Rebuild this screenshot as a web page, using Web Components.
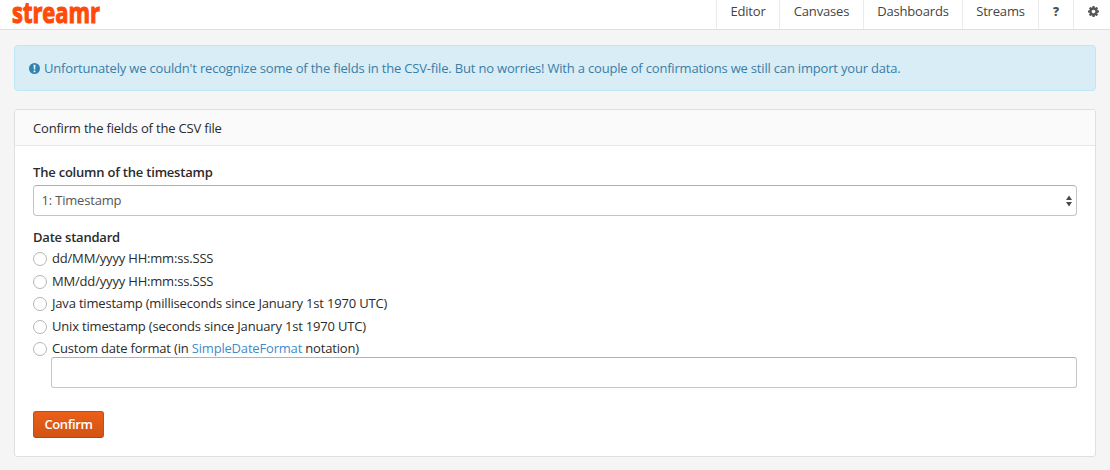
<!DOCTYPE html>
<html lang="en">
<head>
<meta charset="utf-8">
<title>streamr</title>
<style>
html,body{margin:0;height:100%;background:#f5f5f5;overflow:hidden}
body{font:13px/18px "Open Sans","Noto Sans",sans-serif;letter-spacing:-.184px;color:#2b2b2b}
</style>
</head>
<body>
<csv-import-page></csv-import-page>
<script>
const define = (name, html) => {
  const template = document.createElement('template');
  template.innerHTML = '<style>*{box-sizing:border-box}</style>' + html;
  customElements.define(name, class extends HTMLElement {
    constructor() {
      super();
      this.attachShadow({mode: 'open'}).append(template.content.cloneNode(true));
    }
  });
};

define('brand-logo', `<style>:host{display:block;width:104px;height:29px}svg{display:block;overflow:visible}
text{font:700 28px "Open Sans",sans-serif;letter-spacing:0;fill:#ff4a0a;stroke:#ff4a0a;stroke-width:1.1px}</style>
<svg width="104" height="29"><text x="12" y="22.800" textLength="88" lengthAdjust="spacingAndGlyphs">streamr</text></svg>`);

define('nav-item', `<style>:host{box-sizing:border-box;display:flex;justify-content:center;height:29px;padding-top:2px;border-left:1px solid #ebebeb;color:#444;line-height:19px}
svg{display:block}</style><slot></slot>`);

define('gear-icon', `<style>:host{display:block;padding:4px 0 0 2px}svg{display:block}</style>
<svg width="11" height="11" viewBox="0 0 1536 1536"><path fill="#555" d="M1024 768q0-106-75-181t-181-75-181 75-75 181 75 181 181 75 181-75 75-181zm512-109v222q0 12-8 23t-20 13l-185 28q-19 54-39 91 35 50 107 138 10 12 10 25t-9 23q-27 37-99 108t-94 71q-12 0-26-9l-138-108q-44 23-91 38-16 136-29 186-7 28-36 28H657q-14 0-24.500-8.500T621 1506l-28-184q-49-16-90-37l-141 107q-10 9-25 9-14 0-25-11-126-114-165-168-7-10-7-23 0-12 8-23 15-21 51-66.500t54-70.500q-27-50-41-99L29 913q-13-2-21-12.500T0 877V655q0-12 8-23t19-13l186-28q14-46 39-92-40-57-107-138-10-12-10-24 0-10 9-23 26-36 98.500-107.500T337 135q13 0 26 10l138 107q44-23 91-38 16-136 29-186 7-28 36-28h222q14 0 24.500 8.500T915 30l28 184q49 16 90 37l142-107q9-9 24-9 13 0 25 10 129 119 165 170 7 8 7 22 0 12-8 23-15 21-51 66.500t-54 70.500q26 50 41 98l183 28q13 2 21 12.500t8 23.500z"/></svg>`);

define('top-bar', `<style>:host{box-sizing:border-box;display:flex;justify-content:space-between;height:30px;background:#fff;border-bottom:1px solid #dfdfdf}
nav{display:grid;grid-template-columns:63px 84px 99px 76px 35px 37px}
.help{font-weight:800;font-size:12px;color:#505050}</style>
<brand-logo></brand-logo><nav><nav-item>Editor</nav-item><nav-item>Canvases</nav-item><nav-item>Dashboards</nav-item><nav-item>Streams</nav-item><nav-item class="help">?</nav-item><nav-item><gear-icon></gear-icon></nav-item></nav>`);

define('info-alert', `<style>:host{box-sizing:border-box;display:flex;align-items:center;gap:4px;height:46px;margin:15px 14px 0;padding:0 14px;border:1px solid #bce8f1;border-radius:4px;background:#d9edf7;color:#3a7ea6}
svg{display:block;flex:none;margin-top:1px}</style>
<svg width="11" height="11" viewBox="0 0 11 11"><circle cx="5.500" cy="5.500" r="5.500" fill="#3182b0"/><path fill="#e6f4fa" d="M4.500 1.700h2l-.3 4.800H4.800zM4.600 7.500h1.800v1.700H4.600z"/></svg><span><slot></slot></span>`);

define('content-panel', `<style>:host{box-sizing:border-box;display:block;height:348px;margin:18px 14px 0;border:1px solid #e0e0e0;border-radius:3px;background:#fff}
header{height:36px;padding:9px 18px 0;background:#fafafa;border-bottom:1px solid #e7e7e7;border-radius:2px 2px 0 0}
.body{padding:17px 18px 0}</style><header><slot name="title"></slot></header><div class="body"><slot></slot></div>`);

define('field-label', `<style>:host{display:block;font-weight:600;letter-spacing:-.21px;line-height:18px}</style><slot></slot>`);

define('select-box', `<style>:host{box-sizing:border-box;display:flex;align-items:center;justify-content:space-between;height:31px;margin-top:4px;padding:0 4px 0 7.500px;border:1px solid #c4c4c4;border-top-color:#b0b0b0;border-radius:4px;color:#555}
span{margin-top:-2px}svg{display:block}</style><span><slot></slot></span><svg width="6" height="12" viewBox="0 0 6 12"><path fill="#4a4a4a" d="M0 5 3 .5 6 5zM0 7h6l-3 4.500z"/></svg>`);

define('radio-option', `<style>:host{display:flex;height:22.500px;line-height:18px}
i{flex:none;width:14px;height:14px;margin:3px 5px 0 0;border:1px solid #b5b5b5;border-radius:50%;background:#fff}</style><i></i><span><slot></slot></span>`);

define('text-box', `<style>:host{box-sizing:border-box;display:block;height:31px;margin-left:18px;border:1px solid #c6c6c6;border-top-color:#b2b2b2;border-radius:3px}</style>`);

define('primary-button', `<style>:host{display:block;width:71px}
button{display:block;width:71px;height:27px;margin:0;padding:0;border:1px solid #c64d13;border-bottom-color:#b34511;border-radius:3px;background:linear-gradient(#eb5f18,#d25314);color:#fff;font:600 13px/23px "Open Sans",sans-serif;letter-spacing:-.4px;text-shadow:0 -1px 0 rgba(0,0,0,.1)}</style><button><slot></slot></button>`);

define('csv-import-page', `<style>:host{display:block}
.date{margin-top:12px}.options{margin-top:3px;height:108px}a{color:#428bca;text-decoration:none}
primary-button{margin-top:23px}</style>
<top-bar></top-bar>
<info-alert>Unfortunately we couldn't recognize some of the fields in the CSV-file. But no worries! With a couple of confirmations we still can import your data.</info-alert>
<content-panel><span slot="title">Confirm the fields of the CSV file</span>
<field-label>The column of the timestamp</field-label>
<select-box>1: Timestamp</select-box>
<field-label class="date">Date standard</field-label>
<div class="options"><radio-option>dd/MM/yyyy HH:mm:ss.SSS</radio-option><radio-option>MM/dd/yyyy HH:mm:ss.SSS</radio-option><radio-option>Java timestamp (milliseconds since January 1st 1970 UTC)</radio-option><radio-option>Unix timestamp (seconds since January 1st 1970 UTC)</radio-option><radio-option>Custom date format (in <a>SimpleDateFormat</a> notation)</radio-option></div>
<text-box></text-box>
<primary-button>Confirm</primary-button>
</content-panel>`);
</script>
</body>
</html>
